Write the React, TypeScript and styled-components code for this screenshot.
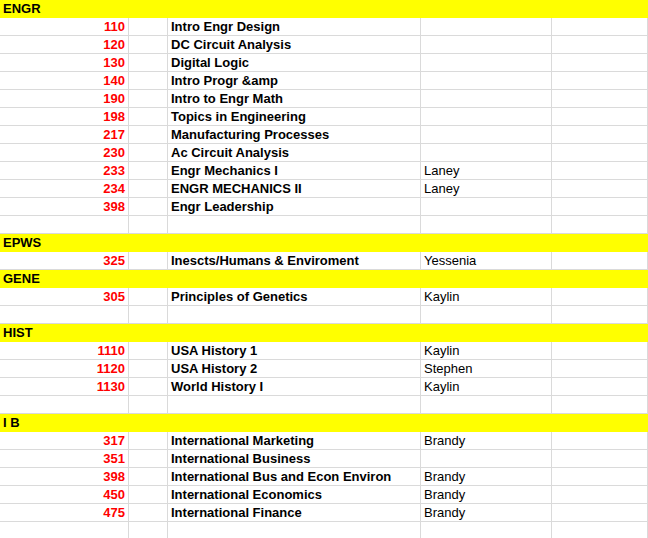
import styled, { createGlobalStyle } from "styled-components";

const Global = createGlobalStyle`
  body { margin: 0; background: #fff; font-family: "Liberation Sans", Arial, sans-serif; }
`;

type Row =
  | { kind: "head"; label: string }
  | { kind: "item"; num?: string; name?: string; who?: string };

const rows: Row[] = [
  { kind: "head", label: "ENGR" },
  { kind: "item", num: "110", name: "Intro Engr Design" },
  { kind: "item", num: "120", name: "DC Circuit Analysis" },
  { kind: "item", num: "130", name: "Digital Logic" },
  { kind: "item", num: "140", name: "Intro Progr &amp" },
  { kind: "item", num: "190", name: "Intro to Engr Math" },
  { kind: "item", num: "198", name: "Topics in Engineering" },
  { kind: "item", num: "217", name: "Manufacturing Processes" },
  { kind: "item", num: "230", name: "Ac Circuit Analysis" },
  { kind: "item", num: "233", name: "Engr Mechanics I", who: "Laney" },
  { kind: "item", num: "234", name: "ENGR MECHANICS II", who: "Laney" },
  { kind: "item", num: "398", name: "Engr Leadership" },
  { kind: "item" },
  { kind: "head", label: "EPWS" },
  { kind: "item", num: "325", name: "Inescts/Humans & Enviroment", who: "Yessenia" },
  { kind: "head", label: "GENE" },
  { kind: "item", num: "305", name: "Principles of Genetics", who: "Kaylin" },
  { kind: "item" },
  { kind: "head", label: "HIST" },
  { kind: "item", num: "1110", name: "USA History 1", who: "Kaylin" },
  { kind: "item", num: "1120", name: "USA History 2", who: "Stephen" },
  { kind: "item", num: "1130", name: "World History I", who: "Kaylin" },
  { kind: "item" },
  { kind: "head", label: "I B" },
  { kind: "item", num: "317", name: "International Marketing", who: "Brandy" },
  { kind: "item", num: "351", name: "International Business" },
  { kind: "item", num: "398", name: "International Bus and Econ Environ", who: "Brandy" },
  { kind: "item", num: "450", name: "International Economics", who: "Brandy" },
  { kind: "item", num: "475", name: "International Finance", who: "Brandy" },
  { kind: "item" },
];

const Sheet = styled.div`
  display: grid;
  grid-template-columns: 129px 39px 253px 131px 1fr;
  grid-auto-rows: 18px;
  font-size: 13px;
  color: #000;
`;

const Cell = styled.div<{ $align?: string; $bold?: boolean; $red?: boolean }>`
  box-sizing: border-box;
  border-right: 1px solid #dadada;
  border-bottom: 1px solid #dadada;
  padding: 0 3px;
  line-height: 17px;
  white-space: nowrap;
  overflow: hidden;
  text-align: ${(p) => p.$align || "left"};
  font-weight: ${(p) => (p.$bold ? "bold" : "normal")};
  color: ${(p) => (p.$red ? "#ff0000" : "#000")};
`;

const Head = styled.div`
  grid-column: 1 / -1;
  background: #ffff00;
  font-weight: bold;
  padding: 0 3px;
  line-height: 17px;
  border-bottom: 1px solid #ffff00;
  box-sizing: border-box;
`;

export default function App() {
  return (
    <>
      <Global />
      <Sheet>
        {rows.map((r, i) =>
          r.kind === "head" ? (
            <Head key={i}>{r.label}</Head>
          ) : (
            [
              <Cell key={i + "a"} $align="right" $bold $red>{r.num}</Cell>,
              <Cell key={i + "b"} />,
              <Cell key={i + "c"} $bold>{r.name}</Cell>,
              <Cell key={i + "d"}>{r.who}</Cell>,
              <Cell key={i + "e"} />,
            ]
          )
        )}
      </Sheet>
    </>
  );
}
